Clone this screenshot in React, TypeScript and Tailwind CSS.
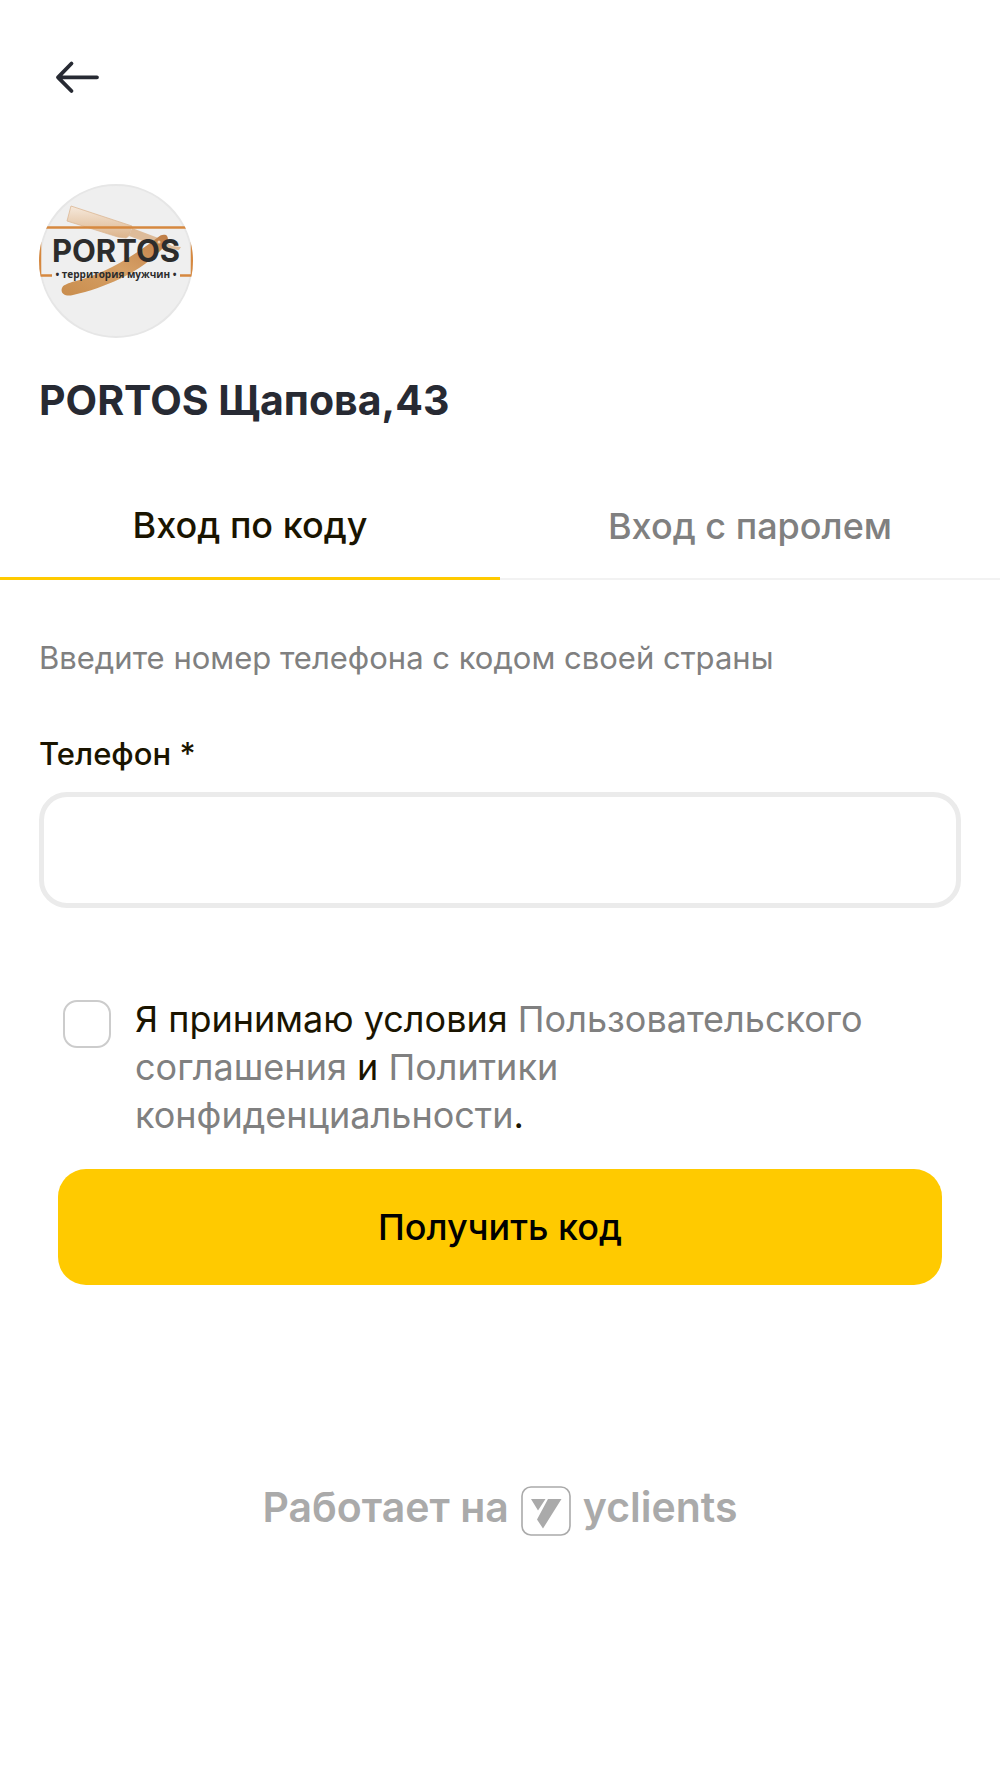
import { useState } from "react";

function BrandAvatar() {
  return (
    <svg viewBox="0 0 154 154" className="h-[154px] w-[154px]" role="img" aria-label="PORTOS">
      <defs>
        <clipPath id="avatarClip">
          <circle cx="77" cy="77" r="77" />
        </clipPath>
        <linearGradient id="handle" x1="0" y1="1" x2="1" y2="0">
          <stop offset="0" stopColor="#c98d4d" />
          <stop offset="0.5" stopColor="#d6a066" />
          <stop offset="1" stopColor="#bf7d45" />
        </linearGradient>
        <linearGradient id="blade" x1="0" y1="0" x2="0" y2="1">
          <stop offset="0" stopColor="#f6e9dc" />
          <stop offset="1" stopColor="#dcb48c" />
        </linearGradient>
      </defs>
      <circle cx="77" cy="77" r="76" fill="#efefef" stroke="#e6e6e6" strokeWidth="2" />
      <g clipPath="url(#avatarClip)">
        <path d="M32 22 L93 42 C91 46 92 52 87 54 L79 53 L28 37 Z" fill="url(#blade)" stroke="#dcb894" strokeWidth="0.8" />
        <path d="M93 44 L122 55 L133 62 L142 63 L140 66 L129 65 L112 60 L90 52 Z" fill="#ddbb99" />
        <path d="M127 51 C131 54 128 60 124 64 C104 86 70 103 34 111 C26 113 21 109 23 104 C24 101 28 100 33 98 C66 90 93 73 118 54 C121 51 124 50 127 51 Z" fill="url(#handle)" />
        <circle cx="120" cy="58" r="1.5" fill="#ead2b8" />
        <path d="M6 43.5 H148" stroke="#d6883f" strokeWidth="2.5" />
        <path d="M1 58 V91.5 H13 M153 58 V91.5 H141" fill="none" stroke="#d6883f" strokeWidth="2.5" />
      </g>
      <text x="77" y="78" textAnchor="middle" fontSize="31" fontWeight="700" fill="#2c2c2c">PORTOS</text>
      <text x="77" y="94" textAnchor="middle" fontSize="10" fontWeight="700" fill="#2c2c2c" className="font-['Open_Sans',sans-serif]">• территория мужчин •</text>
    </svg>
  );
}

export default function App() {
  const [tab, setTab] = useState("code");
  const tabClass = (name: string) =>
    `h-[107px] text-4xl font-medium ${tab === name ? "border-b-3 border-[#ffca00]" : "border-b-2 border-[#f2f2f2] text-[#808080]"}`;

  return (
    <main className="min-h-screen bg-white font-['Inter',sans-serif] text-[#1a1400]">
      <header className="px-[39px] pt-10">
        <button type="button" aria-label="Назад" className="flex h-18 w-18 items-center justify-center">
          <svg viewBox="0 0 48 36" className="h-9 w-12" fill="none" stroke="#272a33" strokeWidth="3.8" strokeLinecap="round" strokeLinejoin="round">
            <path d="M20.5 5.5 L7 19.3 L20.5 33 M7 19.3 H46" />
          </svg>
        </button>
      </header>

      <section className="px-[39px] pt-18">
        <BrandAvatar />
        <h1 className="mt-8 text-[41px] leading-[60px] font-bold text-[#272a33]">PORTOS Щапова,43</h1>
      </section>

      <nav className="mt-[43px] grid grid-cols-2">
        <button type="button" onClick={() => setTab("code")} className={tabClass("code")}>Вход по коду</button>
        <button type="button" onClick={() => setTab("password")} className={tabClass("password")}>Вход с паролем</button>
      </nav>

      <form onSubmit={(e) => e.preventDefault()}>
        <div className="px-[39px] pt-14">
          <p className="text-[31px] leading-11 text-[#808080]">Введите номер телефона с кодом своей страны</p>
          <label htmlFor="phone" className="mt-[54px] block text-[31px] leading-10 font-medium">Телефон *</label>
          <input id="phone" type="tel" className="mt-[18px] block h-29 w-full rounded-[28px] border-5 border-[#ebebeb] px-8 text-4xl outline-none" />
        </div>

        <div className="mt-[87px] flex items-start gap-6 px-[63px]">
          <input id="terms" type="checkbox" className="mt-[5px] h-12 w-12 shrink-0 appearance-none rounded-[14px] border-2 border-[#cccccc] checked:bg-[#ffca00]" />
          <label htmlFor="terms" className="text-4xl leading-12">
            Я принимаю условия <a href="#agreement" className="text-[#808080]">Пользовательского соглашения</a> и{" "}
            <a href="#privacy" className="text-[#808080]">Политики конфиденциальности</a>.
          </label>
        </div>

        <div className="mt-[30px] px-[58px]">
          <button type="submit" className="h-29 w-full rounded-[28px] bg-[#ffca00] text-4xl font-medium text-black">Получить код</button>
        </div>
      </form>

      <footer className="mt-[197px] flex items-start justify-center gap-3 pb-20 text-[41px] leading-[50px] font-semibold text-[#aaaaaa]">
        <span>Работает на</span>
        <svg viewBox="0 0 50 50" className="mt-1 h-[50px] w-[50px]" aria-hidden="true">
          <rect x="1" y="1" width="48" height="48" rx="9" fill="none" stroke="currentColor" strokeWidth="1.6" />
          <path d="M10 13 H24.5 L17 24.5 Z M27 13 H40.5 L22 42.5 L16 33.5 Z" fill="currentColor" />
        </svg>
        <span>yclients</span>
      </footer>
    </main>
  );
}
